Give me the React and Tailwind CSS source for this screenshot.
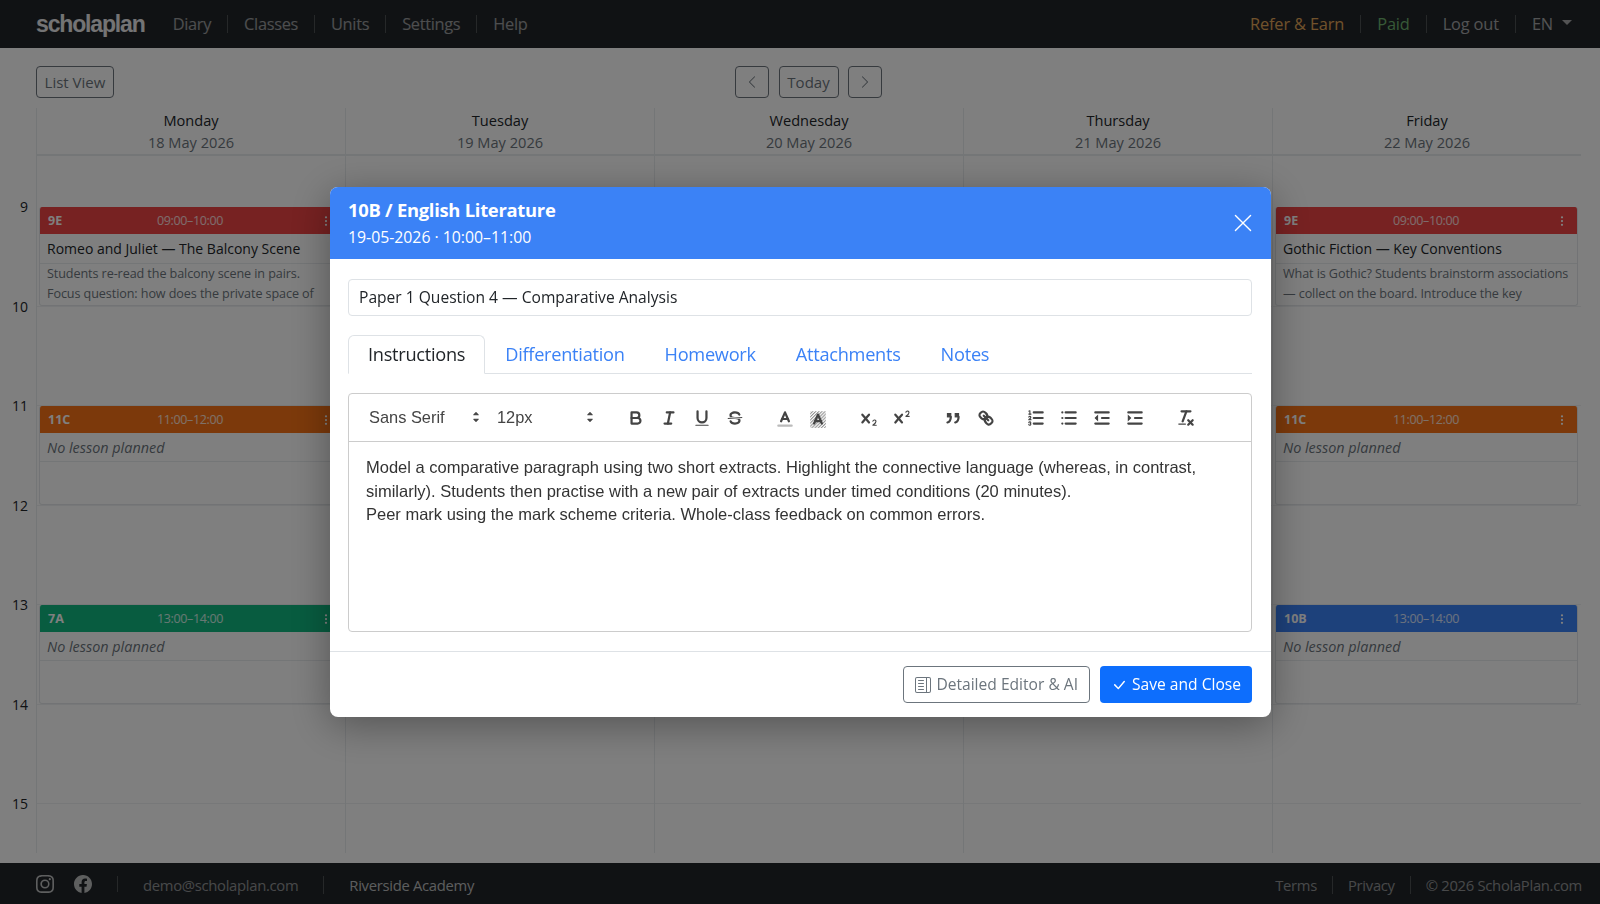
// Lesson planner week view with the lesson dialog open
import { BsChevronLeft, BsChevronRight, BsInstagram, BsFacebook, BsThreeDotsVertical, BsLayoutTextSidebar, BsCheckLg, BsXLg } from 'react-icons/bs';

const FONT = { fontFamily: '"Open Sans", "Noto Sans", sans-serif' };

const navLinks = ['Diary', 'Classes', 'Units', 'Settings', 'Help'];
const hours = [9, 10, 11, 12, 13, 14, 15];

const days = [
  {
    name: 'Monday', date: '18 May 2026',
    lessons: {
      9: { cls: '9E', time: '09:00–10:00', color: 'bg-[#ef4444]', title: 'Romeo and Juliet — The Balcony Scene', text: 'Students re-read the balcony scene in pairs.\nFocus question: how does the private space of' },
      11: { cls: '11C', time: '11:00–12:00', color: 'bg-[#f97316]' },
      13: { cls: '7A', time: '13:00–14:00', color: 'bg-[#10b981]' },
    },
  },
  { name: 'Tuesday', date: '19 May 2026', lessons: {} },
  { name: 'Wednesday', date: '20 May 2026', lessons: {} },
  { name: 'Thursday', date: '21 May 2026', lessons: {} },
  {
    name: 'Friday', date: '22 May 2026',
    lessons: {
      9: { cls: '9E', time: '09:00–10:00', color: 'bg-[#ef4444]', title: 'Gothic Fiction — Key Conventions', text: 'What is Gothic? Students brainstorm associations\n— collect on the board. Introduce the key' },
      11: { cls: '11C', time: '11:00–12:00', color: 'bg-[#f97316]' },
      13: { cls: '10B', time: '13:00–14:00', color: 'bg-[#3b82f6]' },
    },
  },
];

function LessonCard({ lesson }) {
  return (
    <div className="ml-[2px] mr-[3px] h-[99px] overflow-hidden rounded-[3px] border-x border-b border-[#e4e7ea] bg-white">
      <div className={`-mx-px flex h-[27px] items-center justify-between pl-[9px] pr-[10px] pt-px text-[12.5px] text-white ${lesson.color}`}>
        <span className="w-10 font-bold">{lesson.cls}</span>
        <span className="tracking-[-0.03em] text-white/80">{lesson.time}</span>
        <span className="flex w-10 justify-end"><BsThreeDotsVertical className="text-[12px]" /></span>
      </div>
      {lesson.title ? (
        <>
          <div className="flex h-[30px] items-center border-b border-[#e9ecef] px-[7px] text-[14px] font-medium text-[#212529]">{lesson.title}</div>
          <p className="whitespace-pre-line px-[7px] text-[12.6px] leading-[19.5px] tracking-[-0.007em] text-[#6c757d]">{lesson.text}</p>
        </>
      ) : (
        <div className="h-[29px] border-b border-[#e9ecef] px-[7px] pt-[4px] text-[14.4px] font-medium italic text-[#6c757d]">No lesson planned</div>
      )}
    </div>
  );
}

function Week() {
  return (
    <div className="flex min-h-0 flex-1 pr-[19px]">
      <div className="w-9 shrink-0 pt-[89px] pr-2 text-right text-[14px] leading-[20px] text-[#212529]">
        {hours.map((h) => (
          <div key={h} className="h-[99.5px]">{h}</div>
        ))}
      </div>
      <div className="flex-1">
        <div className="grid grid-cols-5">
          {days.map((d) => (
            <div key={d.name} className="h-[48px] border-b-2 border-l border-[#e9ecef] pt-[1px] text-center">
              <div className="text-[14.6px] leading-[22px] text-[#212529]">{d.name}</div>
              <div className="text-[14.6px] leading-[22px] text-[#6c757d]">{d.date}</div>
            </div>
          ))}
        </div>
        <div className="grid grid-cols-5">
          {days.map((d) => (
            <div key={d.name} className="border-l border-[#e9ecef]">
              <div className="h-[51px]" />
              {hours.map((h) => (
                <div key={h} className={h === 15 ? 'h-[49px]' : 'h-[99.5px] border-b border-[#eef0f2]'}>
                  {d.lessons[h] && <LessonCard lesson={d.lessons[h]} />}
                </div>
              ))}
            </div>
          ))}
        </div>
      </div>
    </div>
  );
}

const stroke = { fill: 'none', stroke: '#444', strokeWidth: 2, strokeLinecap: 'round', strokeLinejoin: 'round' };
const thin = { fill: 'none', stroke: '#444', strokeWidth: 1, strokeLinecap: 'round', strokeLinejoin: 'round' };
const fill = { fill: '#444' };

function Tool({ children }) {
  return (
    <span className="flex w-[33px] justify-center">
      <svg viewBox="0 0 18 18" className="h-5 w-5">{children}</svg>
    </span>
  );
}

function Arrows() {
  return (
    <svg viewBox="0 0 18 18" className="h-5 w-5">
      <polygon points="7 11 9 13 11 11 7 11" fill="#444" stroke="#444" strokeLinejoin="round" />
      <polygon points="7 7 9 5 11 7 7 7" fill="#444" stroke="#444" strokeLinejoin="round" />
    </svg>
  );
}

function Toolbar() {
  return (
    <div className="flex h-[48px] items-center border-b border-[#ccc] pl-[20px] text-[#444]" style={{ fontFamily: '"Liberation Sans", Arial, sans-serif' }}>
      <div className="flex w-[128px] items-center justify-between pr-[11px] text-[16.4px]">Sans Serif <Arrows /></div>
      <div className="flex w-[105px] items-center justify-between pr-[2px] text-[16.4px]">12px <Arrows /></div>

      <div className="ml-[17px] flex">
        <Tool><path {...stroke} d="M5,4H9.5A2.5,2.5,0,0,1,12,6.5v0A2.5,2.5,0,0,1,9.5,9H5V4Z" /><path {...stroke} d="M5,9h5.5A2.5,2.5,0,0,1,13,11.5v0A2.5,2.5,0,0,1,10.5,14H5V9Z" /></Tool>
        <Tool><line {...stroke} x1="7" x2="13" y1="4" y2="4" /><line {...stroke} x1="5" x2="11" y1="14" y2="14" /><line {...stroke} x1="8" x2="10" y1="14" y2="4" /></Tool>
        <Tool><path {...stroke} d="M5,3V9a4.012,4.012,0,0,0,4,4H9a4.012,4.012,0,0,0,4-4V3" /><rect {...fill} height="1" rx=".5" ry=".5" width="12" x="3" y="15" /></Tool>
        <Tool>
          <line stroke="#444" strokeWidth="1" x1="15.5" x2="2.5" y1="8.5" y2="9.5" />
          <path {...fill} d="M9.007,8C6.542,7.791,6,7.519,6,6.5,6,5.792,7.283,5,9,5c1.571,0,2.765.679,2.969,1.309a1,1,0,0,0,1.9-.617C13.356,4.106,11.354,3,9,3,6.2,3,4,4.538,4,6.5a3.2,3.2,0,0,0,.5,1.843Z" />
          <path {...fill} d="M8.984,10C11.457,10.208,12,10.479,12,11.5c0,.708-1.283,1.5-3,1.5-1.571,0-2.765-.679-2.969-1.309a1,1,0,1,0-1.9.617C4.644,13.894,6.646,15,9,15c2.8,0,5-1.538,5-3.5a3.2,3.2,0,0,0-.5-1.843Z" />
        </Tool>
      </div>

      <div className="ml-[17px] mt-[3px] flex">
        <Tool><line {...stroke} stroke="#bbb" x1="3" x2="15" y1="15" y2="15" /><polyline {...stroke} points="5.5 11 9 3 12.5 11" /><line {...stroke} x1="11.63" x2="6.38" y1="9" y2="9" /></Tool>
        <Tool>
          <defs>
            <pattern id="hatch" width="2" height="2" patternUnits="userSpaceOnUse" patternTransform="rotate(-45)">
              <line x1="0" x2="2" y1="0.5" y2="0.5" stroke="#888" strokeWidth="0.9" />
            </pattern>
          </defs>
          <rect x="2" y="2" width="14" height="15" fill="url(#hatch)" />
          <polyline {...stroke} points="5.5 13 9 5 12.5 13" /><line {...stroke} x1="11.63" x2="6.38" y1="11" y2="11" />
        </Tool>
      </div>

      <div className="ml-[18px] flex">
        <Tool>
          <path {...fill} d="M15.5,15H13.861a3.858,3.858,0,0,0,1.914-2.975,1.8,1.8,0,0,0-1.6-1.751A1.921,1.921,0,0,0,12.021,11.7a0.50013,0.50013,0,1,0,.957.291h0a0.914,0.914,0,0,1,1.053-.725,0.81,0.81,0,0,1,.744.762c0,1.076-1.16971,1.86982-1.93971,2.43082A1.45639,1.45639,0,0,0,12,15.5a0.5,0.5,0,0,0,.5.5h3A0.5,0.5,0,0,0,15.5,15Z" />
          <path {...fill} d="M9.65,5.241a1,1,0,0,0-1.409.108L6,7.964,3.759,5.349A1,1,0,0,0,2.241,6.649L4.684,9.5,2.241,12.35A1,1,0,0,0,3.759,13.65L6,11.036,8.241,13.65a1,1,0,1,0,1.518-1.3L7.316,9.5,9.759,6.651A1,1,0,0,0,9.65,5.241Z" />
        </Tool>
        <Tool>
          <path {...fill} d="M15.5,7H13.861a4.015,4.015,0,0,0,1.914-2.975,1.8,1.8,0,0,0-1.6-1.751A1.922,1.922,0,0,0,12.021,3.7a0.5,0.5,0,1,0,.957.291,0.917,0.917,0,0,1,1.053-.725,0.81,0.81,0,0,1,.744.762c0,1.077-1.164,1.925-1.934,2.486A1.423,1.423,0,0,0,12,7.5a0.5,0.5,0,0,0,.5.5h3A0.5,0.5,0,0,0,15.5,7Z" />
          <path {...fill} d="M9.651,5.241a1,1,0,0,0-1.41.108L6,7.964,3.759,5.349a1,1,0,1,0-1.519,1.3L4.683,9.5,2.241,12.35a1,1,0,1,0,1.519,1.3L6,11.036l2.241,2.614a1,1,0,0,0,1.519-1.3L7.317,9.5,9.759,6.651A1,1,0,0,0,9.651,5.241Z" />
        </Tool>
      </div>

      <div className="ml-[18px] flex">
        <Tool>
          <rect {...fill} stroke="#444" height="3" width="3" x="4" y="5" /><rect {...fill} stroke="#444" height="3" width="3" x="11" y="5" />
          <path {...stroke} d="M7,8c0,4.031-3,5-3,5" /><path {...stroke} d="M14,8c0,4.031-3,5-3,5" />
        </Tool>
        <Tool>
          <line {...stroke} x1="7" x2="11" y1="7" y2="11" />
          <path {...stroke} d="M8.9,4.577a3.476,3.476,0,0,1,.36,4.679A3.476,3.476,0,0,1,4.577,8.9C3.185,7.5,2.035,6.4,4.217,4.217S7.5,3.185,8.9,4.577Z" />
          <path {...stroke} d="M13.423,9.1a3.476,3.476,0,0,0-4.679-.36,3.476,3.476,0,0,0,.36,4.679c1.392,1.392,2.5,2.542,4.679.36S14.815,10.5,13.423,9.1Z" />
        </Tool>
      </div>

      <div className="ml-[17px] flex">
        <Tool>
          <line {...stroke} x1="7" x2="15" y1="4" y2="4" /><line {...stroke} x1="7" x2="15" y1="9" y2="9" /><line {...stroke} x1="7" x2="15" y1="14" y2="14" />
          <line {...thin} x1="2.5" x2="4.5" y1="5.5" y2="5.5" />
          <path {...fill} d="M3.5,6A0.5,0.5,0,0,1,3,5.5V3.085l-0.276.138A0.5,0.5,0,0,1,2.053,3c-0.124-.247-0.023-0.324.224-0.447l1-.5A0.5,0.5,0,0,1,4,2.5v3A0.5,0.5,0,0,1,3.5,6Z" />
          <path {...thin} d="M4.5,10.5h-2c0-.234,1.85-1.076,1.85-2.234A0.959,0.959,0,0,0,2.5,8.156" />
          <path {...thin} d="M2.5,14.846a0.959,0.959,0,0,0,1.85-.109A0.7,0.7,0,0,0,3.75,14a0.688,0.688,0,0,0,.6-0.736,0.959,0.959,0,0,0-1.85-.109" />
        </Tool>
        <Tool>
          <line {...stroke} x1="6" x2="15" y1="4" y2="4" /><line {...stroke} x1="6" x2="15" y1="9" y2="9" /><line {...stroke} x1="6" x2="15" y1="14" y2="14" />
          <line {...stroke} x1="3" x2="3" y1="4" y2="4" /><line {...stroke} x1="3" x2="3" y1="9" y2="9" /><line {...stroke} x1="3" x2="3" y1="14" y2="14" />
        </Tool>
        <Tool>
          <line {...stroke} x1="3" x2="15" y1="14" y2="14" /><line {...stroke} x1="3" x2="15" y1="4" y2="4" /><line {...stroke} x1="9" x2="15" y1="9" y2="9" />
          <polygon points="5 7 5 11 3 9 5 7" fill="#444" stroke="#444" strokeWidth="1" />
        </Tool>
        <Tool>
          <line {...stroke} x1="3" x2="15" y1="14" y2="14" /><line {...stroke} x1="3" x2="15" y1="4" y2="4" /><line {...stroke} x1="9" x2="15" y1="9" y2="9" />
          <polygon points="3 7 3 11 5 9 3 7" fill="#444" stroke="#444" strokeWidth="1" />
        </Tool>
      </div>

      <div className="ml-[18px] flex">
        <Tool>
          <line {...stroke} x1="5" x2="13" y1="3" y2="3" /><line {...stroke} x1="6" x2="9.35" y1="12" y2="3" />
          <line {...stroke} x1="11" x2="15" y1="11" y2="15" /><line {...stroke} x1="15" x2="11" y1="11" y2="15" />
          <rect {...fill} height="1" rx=".5" ry=".5" width="7" x="2" y="14" />
        </Tool>
      </div>
    </div>
  );
}

function LessonDialog() {
  const tabs = ['Differentiation', 'Homework', 'Attachments', 'Notes'];
  return (
    <div className="fixed inset-0 flex justify-center bg-black/50 pl-[1px] pt-[187px]">
      <div className="h-[530px] w-[941px] overflow-hidden rounded-lg bg-white shadow-[0_8px_40px_rgba(0,0,0,0.35)]">
        <div className="flex h-[72px] items-center justify-between bg-[#3b82f6] pl-[18px] pr-[17px] pt-[2px] text-white">
          <div>
            <div className="text-[18.4px] font-bold leading-[26px] tracking-[-0.015em]">10B / English Literature</div>
            <div className="text-[15.8px] leading-[28px]">19-05-2026 · 10:00–11:00</div>
          </div>
          <BsXLg className="-mt-[2px] text-[22px]" />
        </div>

        <div className="pl-[18px] pr-[19px] pt-5">
          <div className="flex h-[37px] items-center rounded border border-[#dee2e6] px-[10px] pt-px text-[15.6px] text-[#212529]">
            Paper 1 Question 4 — Comparative Analysis
          </div>

          <div className="mt-[19px] flex h-[39px] border-b border-[#dee2e6] text-[18.2px] tracking-[-0.015em]">
            <div className="flex h-[39px] items-center rounded-t-md border border-[#dee2e6] border-b-white bg-white px-[19px] text-[#212529]">Instructions</div>
            {tabs.map((t) => (
              <div key={t} className="flex items-center px-5 pt-px text-[#3b82f6]">{t}</div>
            ))}
          </div>

          <div className="mt-[19px] h-[239px] rounded border border-[#ccc]">
            <Toolbar />
            <div className="px-[17px] pt-[14px] text-[16.5px] leading-[23.5px] text-[#333]" style={{ fontFamily: '"Liberation Sans", Arial, sans-serif' }}>
              <p>Model a comparative paragraph using two short extracts. Highlight the connective language (whereas, in contrast, similarly). Students then practise with a new pair of extracts under timed conditions (20 minutes).</p>
              <p>Peer mark using the mark scheme criteria. Whole-class feedback on common errors.</p>
            </div>
          </div>
        </div>

        <div className="mt-[19px] flex h-[65px] items-center justify-end gap-[10px] border-t border-[#dee2e6] pr-[19px] text-[15.6px]">
          <button className="flex h-[37px] items-center gap-[5px] rounded border border-[#6c757d] px-[11px] pt-px text-[#6c757d]">
            <BsLayoutTextSidebar className="text-[16px]" /> Detailed Editor &amp; AI
          </button>
          <button className="flex h-[37px] items-center gap-[5px] rounded bg-[#0d6efd] px-[11px] pt-px font-medium text-white">
            <BsCheckLg className="text-[16px]" /> Save and Close
          </button>
        </div>
      </div>
    </div>
  );
}

export default function App() {
  return (
    <div className="flex h-[904px] flex-col overflow-hidden bg-white" style={FONT}>
      <nav className="flex h-12 shrink-0 items-center justify-between bg-[#212529] pl-9 pr-7 text-[16.4px] tracking-[-0.02em]">
        <div className="flex items-center">
          <span className="mr-[12px] text-[23px] font-bold tracking-[-0.05em] text-white/90" style={{ fontFamily: '"Liberation Sans", sans-serif' }}>scholaplan</span>
          {navLinks.map((l, i) => (
            <span key={l} className={`px-4 leading-[18px] text-white/55 ${i < navLinks.length - 1 ? 'border-r border-white/20' : ''}`}>{l}</span>
          ))}
        </div>
        <div className="flex items-center leading-[18px] tracking-[-0.01em]">
          <span className="border-r border-white/20 pr-4 text-[#e0a458]">Refer &amp; Earn</span>
          <span className="border-r border-white/20 px-4 text-[#6fb36f]">Paid</span>
          <span className="border-r border-white/20 px-4 text-white/60">Log out</span>
          <span className="flex items-center gap-[9px] pl-4 text-white/60">EN <i className="mb-[3px] border-x-[5px] border-t-[5px] border-x-transparent border-t-white/60" /></span>
        </div>
      </nav>

      <div className="grid h-[60px] shrink-0 grid-cols-3 items-start pl-9 pr-[19px] pt-[18px] text-[15px] text-[#6c757d]">
        <button className="h-8 w-[78px] rounded border border-[#6c757d]">List View</button>
        <div className="flex justify-center gap-[9.5px]">
          <button className="flex h-8 w-[34px] items-center justify-center rounded border border-[#6c757d]"><BsChevronLeft className="text-[14px]" /></button>
          <button className="h-8 w-[60px] rounded border border-[#6c757d]">Today</button>
          <button className="flex h-8 w-[34px] items-center justify-center rounded border border-[#6c757d]"><BsChevronRight className="text-[14px]" /></button>
        </div>
      </div>

      <Week />

      <footer className="flex h-[41px] shrink-0 items-center justify-between bg-[#212529] pl-9 pr-[18px] text-[14.8px] tracking-[-0.02em]">
        <div className="flex items-center leading-[18px]">
          <BsInstagram className="text-[18px] text-white/70" />
          <BsFacebook className="ml-5 text-[18px] text-white/70" />
          <span className="ml-[25px] h-4 border-l border-white/20" />
          <span className="ml-[25px] mt-[3px] border-r border-white/20 pr-[25px] text-white/50">demo@scholaplan.com</span>
          <span className="mt-[3px] pl-[25px] text-white/70">Riverside Academy</span>
        </div>
        <div className="mt-[3px] flex items-center leading-[18px] text-white/50">
          <span className="border-r border-white/20 pr-[15px]">Terms</span>
          <span className="border-r border-white/20 px-[15px]">Privacy</span>
          <span className="pl-[15px]">© 2026 ScholaPlan.com</span>
        </div>
      </footer>

      <LessonDialog />
    </div>
  );
}
